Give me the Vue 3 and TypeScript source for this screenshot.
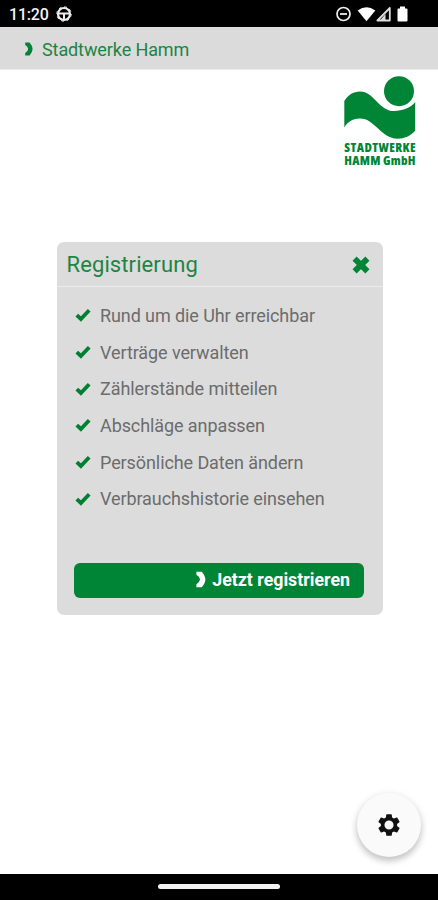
<script setup lang="ts">
const benefits: string[] = [
  'Rund um die Uhr erreichbar',
  'Verträge verwalten',
  'Zählerstände mitteilen',
  'Abschläge anpassen',
  'Persönliche Daten ändern',
  'Verbrauchshistorie einsehen',
]
</script>

<template>
  <div class="screen">
    <div class="status">
      <span class="time">11:20</span>
      <svg class="wheel" viewBox="0 0 16 16">
        <circle cx="8" cy="8" r="6" fill="none" stroke="#eee" stroke-width="2.2" />
        <circle cx="8" cy="8" r="7.2" fill="none" stroke="#eee" stroke-width="1" stroke-dasharray="2.8 2.85" />
        <path d="M2.5 7.4h11M8 8v5.5" fill="none" stroke="#eee" stroke-width="2" />
      </svg>
      <svg class="system" viewBox="0 0 76 18">
        <circle cx="9.5" cy="9" r="6.5" fill="none" stroke="#eee" stroke-width="1.7" />
        <path d="M6 9h7" stroke="#eee" stroke-width="1.8" />
        <path d="M23.7 5.6Q32.5-1.2 41.3 5.6L32.5 16.3Z" fill="#fff" />
        <path d="M43.4 15.5L55.8 3V15.5Z" fill="none" stroke="#ddd" stroke-width="1.8" stroke-linejoin="round" />
        <path d="M46 15.5L51.5 9V15.5Z" fill="#ddd" />
        <path d="M66 1.5h5v2h1.5q1 0 1 1v11q0 1-1 1h-8q-1 0-1-1v-11q0-1 1-1H66Z" fill="#fff" />
      </svg>
    </div>

    <header class="bar">
      <svg class="chevron" viewBox="0 0 8 14"><path d="M.2.6H4.6Q7.6 4 7.6 7T4.6 13.4H.2V11Q2.8 9.6 3.2 7Q2.8 4.4 .2 3Z" /></svg>
      <span class="bar-title">Stadtwerke Hamm</span>
    </header>

    <main class="content">
      <svg class="logo" viewBox="0 0 74 92">
        <circle cx="56" cy="16.2" r="15" />
        <path d="M1.3 26C5 20 10 16.4 17 16.4C31 16.4 36 36 51 36C60 36 68 32.5 72.2 27V55.5C68 61 61 63.7 54.5 63.7C38 63.7 32 43.5 17 43.5C9 43.5 4 47.5 1.3 52.5Z" />
        <text x="1.3" y="76.6" textLength="71.2" lengthAdjust="spacing">STADTWERKE</text>
        <text x="1.3" y="90" textLength="71.2" lengthAdjust="spacing">HAMM GmbH</text>
      </svg>

      <section class="card">
        <div class="card-head">
          <h1>Registrierung</h1>
          <svg class="close" viewBox="0 0 20 20"><path d="M3.6 3.6L16.4 16.4M16.4 3.6L3.6 16.4" /></svg>
        </div>
        <ul>
          <li v-for="item in benefits" :key="item">
            <svg class="check" viewBox="0 0 16 14"><path d="M1.8 7.1L5.9 11 14.2 2.3" /></svg>
            <span>{{ item }}</span>
          </li>
        </ul>
        <button class="register" type="button">
          <svg class="chevron" viewBox="0 0 8 14"><path d="M.2.6H4.6Q7.6 4 7.6 7T4.6 13.4H.2V11Q2.8 9.6 3.2 7Q2.8 4.4 .2 3Z" /></svg>
          <span>Jetzt registrieren</span>
        </button>
      </section>

      <button class="settings" type="button" aria-label="Einstellungen">
        <svg viewBox="0 0 24 24"><path d="M19.43 12.98c.04-.32.07-.64.07-.98s-.03-.66-.07-.98l2.11-1.65c.19-.15.24-.42.12-.64l-2-3.46c-.12-.22-.39-.3-.61-.22l-2.49 1c-.52-.4-1.08-.73-1.69-.98l-.38-2.65C14.46 2.18 14.25 2 14 2h-4c-.25 0-.46.18-.49.42l-.38 2.65c-.61.25-1.17.59-1.69.98l-2.49-1c-.23-.09-.49 0-.61.22l-2 3.46c-.13.22-.07.49.12.64l2.11 1.65c-.04.32-.07.65-.07.98s.03.66.07.98l-2.11 1.65c-.19.15-.24.42-.12.64l2 3.46c.12.22.39.3.61.22l2.49-1c.52.4 1.08.73 1.69.98l.38 2.65c.03.24.24.42.49.42h4c.25 0 .46-.18.49-.42l.38-2.65c.61-.25 1.17-.59 1.69-.98l2.49 1c.23.09.49 0 .61-.22l2-3.46c.12-.22.07-.49-.12-.64l-2.11-1.65zM12 16.2a4.2 4.2 0 1 1 0-8.4 4.2 4.2 0 0 1 0 8.4z" /></svg>
      </button>
    </main>

    <div class="nav"><span></span></div>
  </div>
</template>

<style scoped>
.screen {
  display: flex;
  flex-direction: column;
  width: 438px;
  height: 900px;
  overflow: hidden;
  background: #fff;
  font-family: Roboto, sans-serif;
}
.screen svg { display: block; flex: none; }
.status {
  display: flex;
  align-items: center;
  height: 27px;
  padding: 1px 28px 0 9px;
  box-sizing: border-box;
  background: #000;
  color: #f4f4f4;
}
.time { width: 46.5px; font-size: 16px; font-weight: 500; line-height: 27px; letter-spacing: -0.2px; }
.wheel { width: 16px; height: 16px; }
.system { width: 76px; height: 18px; margin-left: auto; }
.bar {
  display: flex;
  align-items: center;
  height: 43px;
  padding-left: 25px;
  border-bottom: 1px solid #ececec;
  box-sizing: border-box;
  background: #dbdbdb;
  color: #1c8544;
}
.chevron { width: 8px; height: 14px; fill: currentColor; }
.bar .chevron { margin-top: 1px; color: #008537; }
.bar-title { margin: 3px 0 0 9px; font-size: 18px; line-height: 24px; letter-spacing: -0.1px; }
.content { display: flex; flex-direction: column; height: 804px; }
.logo { width: 74px; height: 92px; margin: 5px 21px 0 0; align-self: flex-end; overflow: visible; fill: #008537; }
.logo text { font-family: "Open Sans", sans-serif; font-size: 12.6px; font-weight: 800; font-stretch: 75%; }
.card {
  width: 326px;
  height: 373px;
  margin: 75px 0 0 56.5px;
  border-radius: 7px;
  background: #dcdcdc;
}
.card-head {
  display: flex;
  justify-content: space-between;
  align-items: center;
  height: 45px;
  padding: 0 12px 0 10px;
  border-bottom: 1px solid #ececec;
  box-sizing: border-box;
}
h1 { margin: 1px 0 0; color: #1c8544; font-size: 22px; font-weight: 400; line-height: 30px; letter-spacing: 0.1px; }
.close { width: 20px; height: 20px; margin-top: 2px; }
.close path { fill: none; stroke: #008537; stroke-width: 5.8; }
ul { margin: 0; padding: 10px 0 0 18px; list-style: none; }
li { display: flex; align-items: center; height: 36.7px; color: #6c6c6c; font-size: 18px; }
li span { margin: 1px 0 0 9.5px; line-height: 24px; letter-spacing: -0.09px; white-space: nowrap; }
.check { width: 16px; height: 14px; }
.check path { fill: none; stroke: #008030; stroke-width: 3.8; }
.register {
  display: flex;
  justify-content: flex-end;
  align-items: center;
  width: 290px;
  height: 35px;
  margin: 45.5px 0 0 17.5px;
  padding: 0 14px 1px 0;
  border: 0;
  border-radius: 6px;
  background: #008537;
  color: #fff;
  font: 700 17.8px/24px Roboto, sans-serif;
}
.register .chevron { width: 10px; height: 17px; margin-right: 6px; }
.settings {
  display: flex;
  align-items: center;
  justify-content: center;
  width: 64px;
  height: 64px;
  margin: auto 17px 17px auto;
  padding: 0;
  border: 0;
  border-radius: 50%;
  background: #fafafa;
  box-shadow: 0 4px 7px rgba(0, 0, 0, 0.22), 0 1px 10px rgba(0, 0, 0, 0.06);
}
.settings svg { width: 26px; height: 26px; fill: #111; }
.nav { display: flex; justify-content: center; height: 26px; background: #000; }
.nav span { width: 122px; height: 5px; margin-top: 10px; border-radius: 3px; background: #f2f2f2; }
</style>
